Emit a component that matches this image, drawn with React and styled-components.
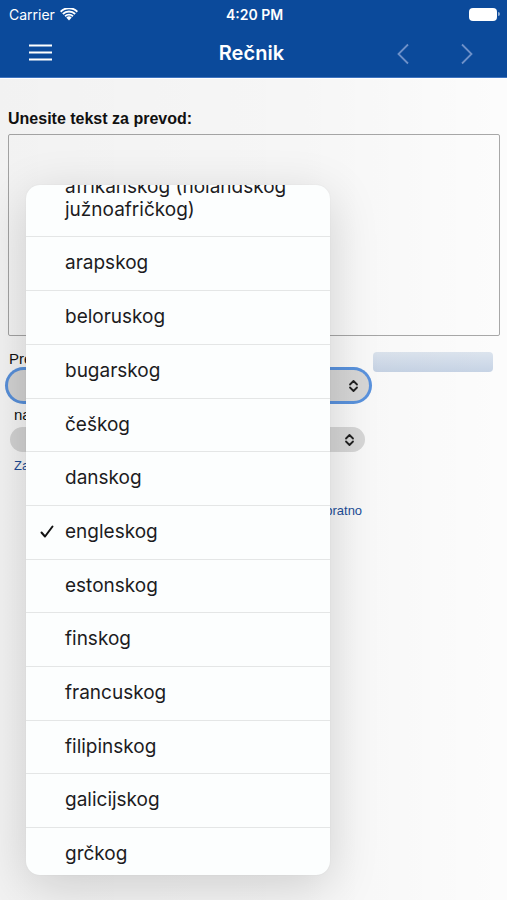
import styled, { createGlobalStyle } from "styled-components";

const GlobalStyle = createGlobalStyle`
  html, body {
    margin: 0;
    padding: 0;
    background: #fff;
  }
  #root {
    width: 507px;
    height: 900px;
    overflow: hidden;
    position: relative;
  }
`;

const Screen = styled.div`
  position: relative;
  width: 507px;
  height: 900px;
  background: #fff;
  font-family: "Liberation Sans", Arial, sans-serif;
`;

const Header = styled.header`
  background: #0b4a9b;
  color: #fff;
  border-bottom: 1px solid #3f74c0;
  font-family: Inter, "Noto Sans", sans-serif;
`;

const StatusBar = styled.div`
  height: 28px;
  display: grid;
  grid-template-columns: 1fr auto 1fr;
  align-items: center;
  padding: 0 7px 0 9px;
  font-size: 14px;
`;

const Carrier = styled.div`
  display: flex;
  align-items: center;
  gap: 5px;
`;

const Clock = styled.div`
  font-weight: 600;
`;

const Battery = styled.div`
  justify-self: end;
  display: flex;
  align-items: center;
  gap: 1px;
  span:first-child {
    width: 26px;
    height: 11px;
    border-radius: 4px;
    background: #fff;
    border: 1px solid rgba(255, 255, 255, 0.6);
  }
  span:last-child {
    width: 2px;
    height: 4px;
    border-radius: 0 2px 2px 0;
    background: rgba(255, 255, 255, 0.55);
  }
`;

const NavBar = styled.nav`
  height: 49px;
  display: grid;
  grid-template-columns: 1fr auto 1fr;
  align-items: center;
  padding: 0 33px 0 29px;
`;

const Title = styled.h1`
  margin: 0;
  font-size: 20px;
  font-weight: 600;
  letter-spacing: 0.1px;
`;

const NavArrows = styled.div`
  justify-self: end;
  display: flex;
  gap: 50px;
  padding-top: 2px;
`;

const Content = styled.main`
  padding: 32px 7px 0 8px;
`;

const Label = styled.div`
  font-size: ${(p) => (p.$bold ? 16 : 15)}px;
  font-weight: ${(p) => (p.$bold ? 700 : 400)};
  color: #111;
  margin: ${(p) => p.$margin || "0"};
`;

const TextBox = styled.div`
  margin-top: 6px;
  height: 200px;
  border: 1px solid #aaa;
  border-radius: 2px;
  background: #fff;
`;

const Row = styled.div`
  display: flex;
  align-items: flex-start;
  gap: 4px;
`;

const Selector = styled.div`
  width: ${(p) => p.$width}px;
  height: ${(p) => p.$height}px;
  border-radius: 16px;
  background: #dcdcdc;
  display: flex;
  align-items: center;
  justify-content: flex-end;
  padding-right: 10px;
  box-sizing: border-box;
  margin-left: ${(p) => p.$indent || 0}px;
  box-shadow: ${(p) => (p.$focus ? "0 0 0 3px #5c96e3" : "none")};
`;

const SideButton = styled.div`
  width: 120px;
  height: 20px;
  margin-top: -18px;
  border-radius: 4px;
  background: linear-gradient(#dfe7f1, #c9d6e8);
`;

const Link = styled.div`
  color: #1e4f9c;
  font-size: 13px;
  margin: ${(p) => p.$margin || "0"};
`;

const Dim = styled.div`
  position: absolute;
  left: 0;
  right: 0;
  top: 79px;
  bottom: 0;
  background: linear-gradient(
    to right,
    rgba(0, 0, 0, 0.05),
    rgba(0, 0, 0, 0.035) 60%,
    rgba(0, 0, 0, 0.01)
  );
  pointer-events: none;
`;

const Popup = styled.div`
  position: absolute;
  left: 26px;
  top: 185px;
  width: 304px;
  height: 690px;
  border-radius: 14px;
  overflow: hidden;
  background: #fcfefe;
  box-shadow: 0 12px 50px rgba(0, 0, 0, 0.16), 0 0 2px rgba(0, 0, 0, 0.06);
  font-family: Inter, "Noto Sans", sans-serif;
`;

const List = styled.ul`
  list-style: none;
  margin: -24px 0 0;
  padding: 0;
`;

const Item = styled.li`
  position: relative;
  padding: 15px 16px 15px 39px;
  font-size: 19px;
  line-height: 22.7px;
  color: #1c1c1e;
  border-bottom: 1px solid #e4e6e6;
`;

const Check = styled.svg`
  position: absolute;
  left: 14px;
  top: 19px;
`;

const languages = [
  "afrikanskog (holandskog južnoafričkog)",
  "arapskog",
  "beloruskog",
  "bugarskog",
  "češkog",
  "danskog",
  "engleskog",
  "estonskog",
  "finskog",
  "francuskog",
  "filipinskog",
  "galicijskog",
  "grčkog",
  "gruzijskog",
];

const Chevrons = () => (
  <svg width="11" height="14" viewBox="0 0 11 14" fill="none">
    <path d="M2 5.5L5.5 2L9 5.5M2 8.5L5.5 12L9 8.5" stroke="#222" strokeWidth="1.8" strokeLinecap="round" strokeLinejoin="round" />
  </svg>
);

export default function App() {
  return (
    <>
      <GlobalStyle />
      <Screen>
        <Header>
          <StatusBar>
            <Carrier>
              Carrier
              <svg width="18" height="13" viewBox="0 0 18 13">
                <path d="M9 12.5L6.3 9.6a3.8 3.8 0 0 1 5.4 0z" fill="#fff" />
                <path d="M4.4 7.6a6.5 6.5 0 0 1 9.2 0l-1.3 1.4a4.6 4.6 0 0 0-6.6 0z" fill="#fff" />
                <path d="M2.2 5.3a9.6 9.6 0 0 1 13.6 0l-1.3 1.4a7.7 7.7 0 0 0-11 0z" fill="#fff" />
                <path d="M0 3a12.7 12.7 0 0 1 18 0l-1.3 1.4a10.8 10.8 0 0 0-15.4 0z" fill="#fff" />
              </svg>
            </Carrier>
            <Clock>4:20 PM</Clock>
            <Battery>
              <span />
              <span />
            </Battery>
          </StatusBar>
          <NavBar>
            <svg width="23" height="17" viewBox="0 0 23 17">
              <path d="M0 1.5h23M0 8.5h23M0 15.5h23" stroke="#fff" strokeWidth="2.2" />
            </svg>
            <Title>Rečnik</Title>
            <NavArrows>
              <svg width="14" height="22" viewBox="0 0 14 22" fill="none">
                <path d="M12 1.5L2.5 11l9.5 9.5" stroke="#6e91c9" strokeWidth="1.8" />
              </svg>
              <svg width="14" height="22" viewBox="0 0 14 22" fill="none">
                <path d="M2 1.5L11.5 11 2 20.5" stroke="#6e91c9" strokeWidth="1.8" />
              </svg>
            </NavArrows>
          </NavBar>
        </Header>
        <Content>
          <Label $bold>Unesite tekst za prevod:</Label>
          <TextBox />
          <Label $margin="14px 0 3px 1px">Prevedi sa</Label>
          <Row>
            <Selector $width={361} $height={31} $focus>
              <Chevrons />
            </Selector>
            <SideButton />
          </Row>
          <Label $margin="5px 0 4px 6px">na</Label>
          <Selector $width={355} $height={25} $indent={2}>
            <Chevrons />
          </Selector>
          <Link $margin="6px 0 0 6px">Zamenite jezike</Link>
          <Link $margin="30px 0 0 310px">obratno</Link>
        </Content>
        <Dim />
        <Popup>
          <List>
            {languages.map((lang) => (
              <Item key={lang}>
                {lang === "engleskog" && (
                  <Check width="14" height="14" viewBox="0 0 14 14" fill="none">
                    <path d="M1.5 7.5L5 11.5 12.5 1.5" stroke="#111" strokeWidth="2" strokeLinecap="round" strokeLinejoin="round" />
                  </Check>
                )}
                {lang}
              </Item>
            ))}
          </List>
        </Popup>
      </Screen>
    </>
  );
}
